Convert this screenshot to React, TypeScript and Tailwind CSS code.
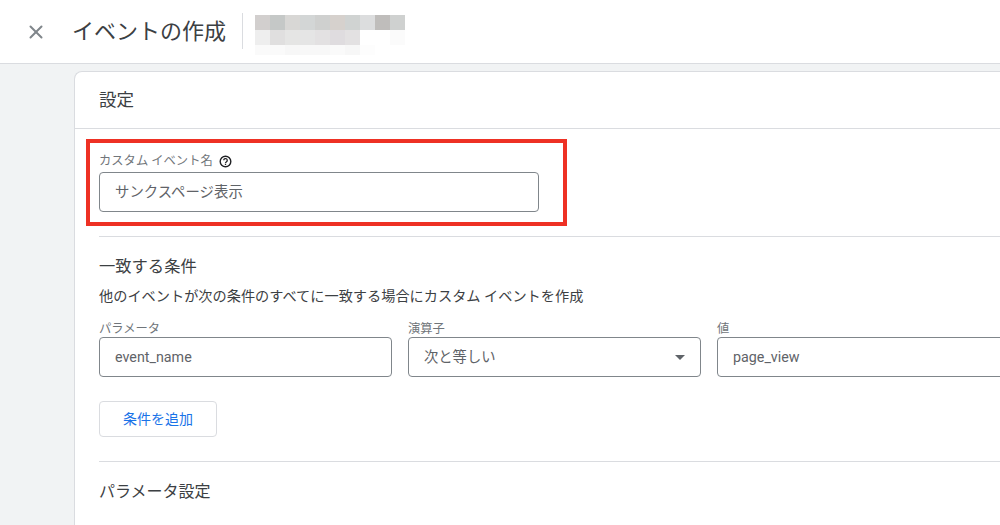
import { X } from "lucide-react";

const blurRows = [
  { height: "h-[15px]", cells: ["bg-[#d2cfce]", "bg-[#c5c8c7]", "bg-[#d8d7d5]", "bg-[#d3d6d6]", "bg-[#cfd0cf]", "bg-[#d6d1cd]", "bg-[#d0d3d2]", "bg-[#dcddde]", "bg-[#bfbdbb]", "bg-[#cfd1d0]"] },
  { height: "h-[15px]", cells: ["bg-[#eeeeee]", "bg-[#e0dfdf]", "bg-[#e5e5e4]", "bg-[#e5e5e5]", "bg-[#e3e1e2]", "bg-[#dfdcdf]", "bg-[#e3e1e2]", "bg-white", "bg-white", "bg-[#fbfbfb]"] },
  { height: "h-[10px]", cells: ["bg-[#fafafa]", "bg-[#fafafa]", "bg-[#f7f7f7]", "bg-[#f8f8f8]", "bg-[#f8f8f8]", "bg-[#fafafa]", "bg-[#f7f7f7]", "bg-[#fdfdfd]", "bg-white", "bg-white"] },
];

function Field({ label, value, width, select }: { label: string; value: string; width: string; select?: boolean }) {
  return (
    <div className={`shrink-0 ${width}`}>
      <div className="h-[16px] text-[12.3px] leading-[16px] text-[#70757a]">{label}</div>
      <div className="flex h-[40px] items-center justify-between rounded-[4px] border border-[#80868b] pl-[15px] pr-[15px] pt-[1px] text-[14.3px] text-[#5f6368]">
        <span>{value}</span>
        {select && <span className="h-0 w-0 border-x-[5px] border-t-[5px] border-x-transparent border-t-[#5f6368]" />}
      </div>
    </div>
  );
}

export default function App() {
  return (
    <div className="flex h-[525px] w-[1000px] flex-col overflow-hidden bg-[#f1f3f4] font-['Roboto','Noto_Sans_CJK_JP',sans-serif]">
      <header className="flex h-[64px] shrink-0 items-center border-b border-[#dadce0] bg-white pl-[25px]">
        <X size={22} strokeWidth={2.2} className="text-[#80868b]" />
        <h1 className="ml-[25px] text-[22px] font-normal text-[#3c4043]">イベントの作成</h1>
        <div className="ml-[16px] mb-[1px] h-[36px] w-px bg-[#dadce0]" />
        <div className="ml-[12px] mt-[6px] flex flex-col">
          {blurRows.map((row, i) => (
            <div key={i} className={`flex ${row.height}`}>
              {row.cells.map((c, j) => (
                <div key={j} className={`w-[15px] ${c}`} />
              ))}
            </div>
          ))}
        </div>
      </header>

      <main className="ml-[74px] mt-[7px] flex-1 rounded-tl-[8px] border-l border-t border-[#dadce0] bg-white">
        <div className="flex h-[57px] items-center border-b border-[#dadce0] pl-[24px] text-[17.5px] text-[#3c4043]">設定</div>

        <div className="ml-[11px] mt-[10px] h-[87px] w-[481px] border-4 border-[#ee3124] pl-[9px] pt-[10px]">
          <div className="flex h-[16px] items-center text-[12.3px] leading-[16px] text-[#70757a]">
            カスタム イベント名
            <svg className="ml-[6px]" width="13" height="13" viewBox="0 0 12 12" fill="none">
              <circle cx="6" cy="6" r="4.9" stroke="#202124" strokeWidth="1.3" />
              <path d="M4.4 4.9a1.6 1.6 0 1 1 2.5 1.3c-.6.4-.9.6-.9 1.2" stroke="#202124" strokeWidth="1.2" />
              <rect x="5.4" y="8" width="1.2" height="1.2" fill="#202124" />
            </svg>
          </div>
          <div className="mt-[3px] flex h-[40px] w-[440px] items-center rounded-[4px] border border-[#80868b] pl-[15px] pt-[1px] text-[14.4px] text-[#5f6368]">
            サンクスページ表示
          </div>
        </div>

        <div className="ml-[24px] mt-[10px] border-t border-[#dadce0] pt-[20px]">
          <h2 className="text-[16.3px] font-normal leading-[20px] text-[#3c4043]">一致する条件</h2>
          <p className="mt-[9px] text-[14.2px] leading-[20px] text-[#3c4043]">他のイベントが次の条件のすべてに一致する場合にカスタム イベントを作成</p>
          <div className="mt-[15px] flex gap-[16px]">
            <Field label="パラメータ" value="event_name" width="w-[293px]" />
            <Field label="演算子" value="次と等しい" width="w-[293px]" select />
            <Field label="値" value="page_view" width="w-[293px]" />
          </div>
          <button className="mt-[24px] flex h-[36px] w-[118px] items-center justify-center rounded-[4px] border border-[#dadce0] bg-white text-[14px] text-[#1a73e8]">
            条件を追加
          </button>
          <div className="mt-[24px] border-t border-[#dadce0] pt-[20px] text-[16px] leading-[20px] text-[#3c4043]">パラメータ設定</div>
        </div>
      </main>
    </div>
  );
}
